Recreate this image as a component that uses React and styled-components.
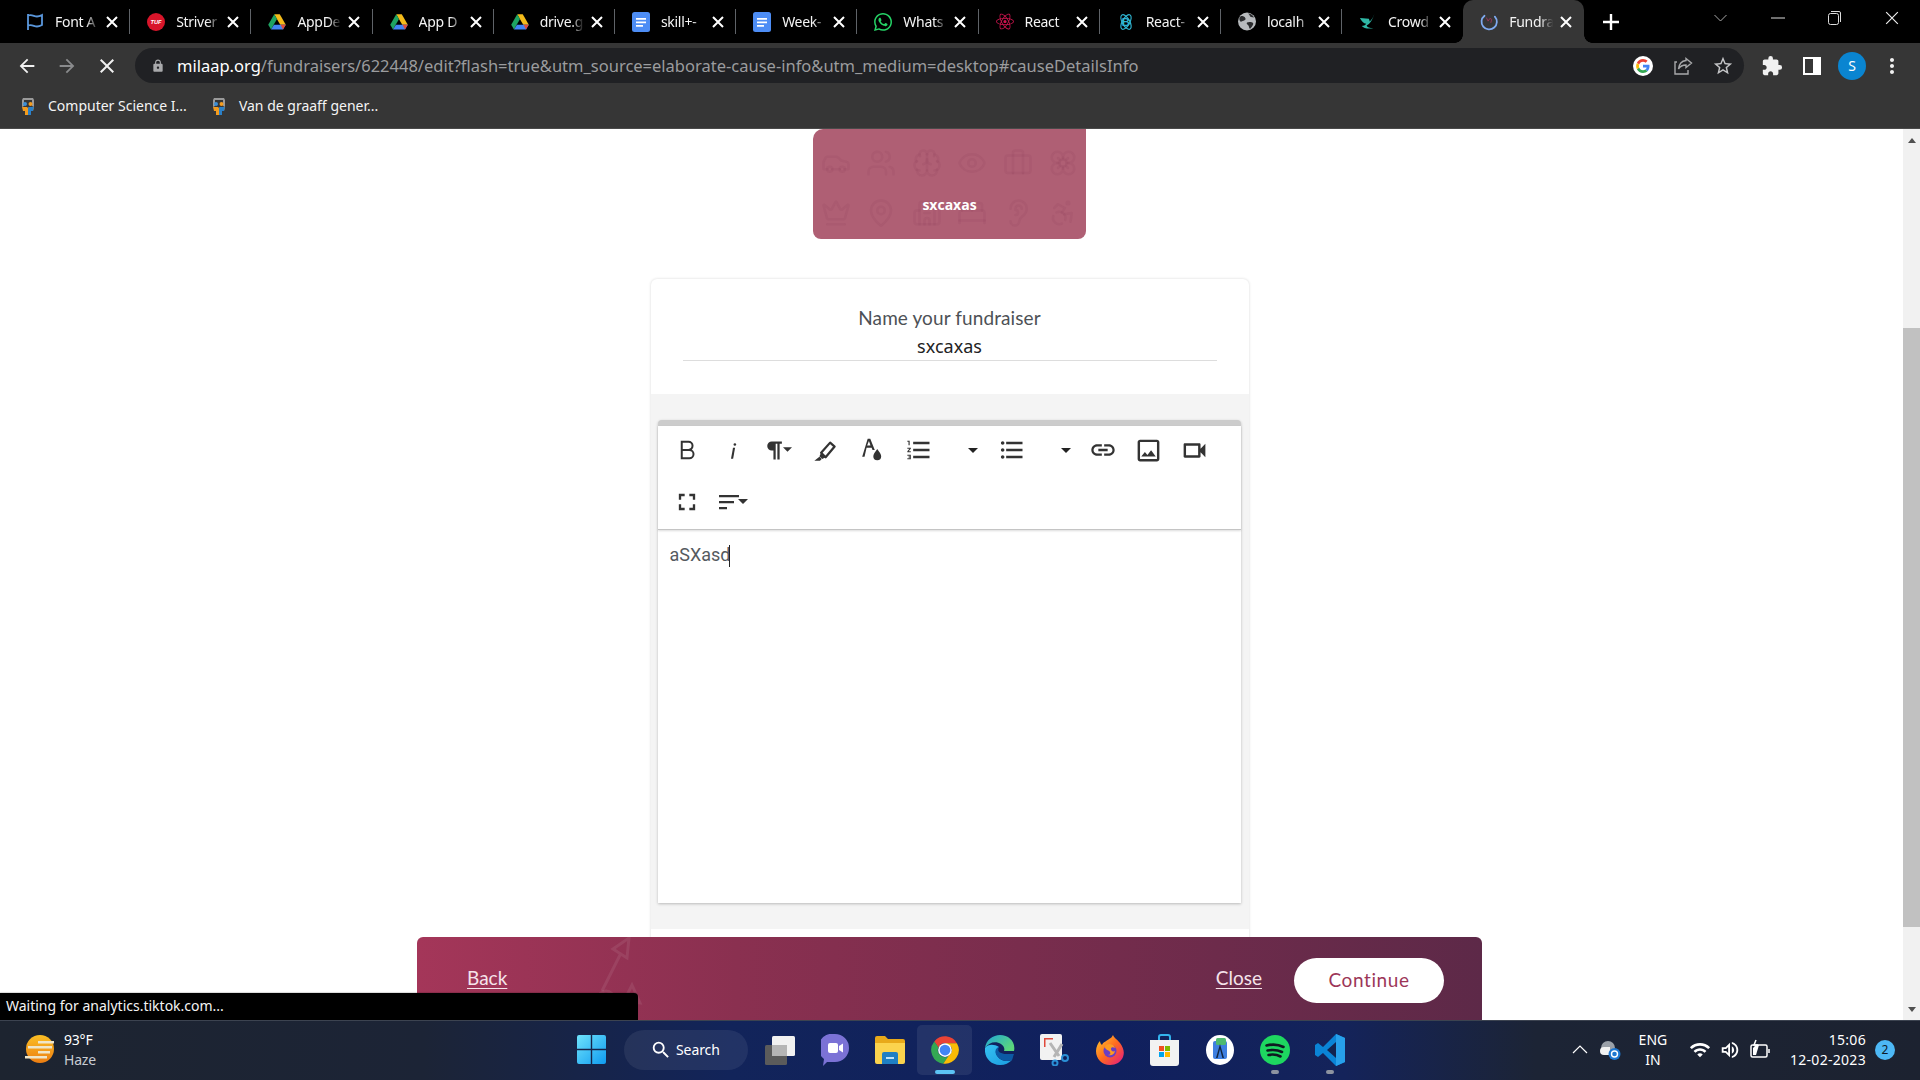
import React from "react"
import styled, { createGlobalStyle } from "styled-components"
import {
  Accessibility,
  BedDouble,
  Brain,
  Briefcase,
  Building2,
  Car,
  Crown,
  Ear,
  Eye,
  Flower,
  MapPin,
  Users,
} from "lucide-react"
import { FaReact, FaWhatsapp } from "react-icons/fa"
import {
  MdArrowBack,
  MdArrowForward,
  MdClose,
  MdFormatListBulleted,
  MdFormatListNumbered,
  MdFullscreen,
  MdLink,
  MdMoreVert,
  MdOutlineImage,
  MdOutlineVideocam,
  MdLock,
  MdStarBorder,
  MdExtension,
  MdSearch,
  MdWifi,
  MdOutlineVolumeUp,
} from "react-icons/md"

const GlobalStyle = createGlobalStyle`
  html, body {
    margin: 0;
    padding: 0;
    background: #fff;
    overflow: hidden;
  }
  * {
    box-sizing: border-box;
  }
`

const Screen = styled.div`
  width: 1920px;
  height: 1080px;
  display: flex;
  flex-direction: column;
  overflow: hidden;
  font-family: "Noto Sans", "Liberation Sans", sans-serif;
`

/* browser chrome */

const TabStrip = styled.div`
  height: 43px;
  flex: none;
  background: #000;
  display: flex;
  padding-left: 9px;
`

const Tab = styled.div`
  width: 121.2px;
  height: 43px;
  display: flex;
  align-items: center;
  position: relative;
  padding-left: 17px;
  background: ${(p) => (p.$active ? "#363636" : "transparent")};
  border-radius: ${(p) => (p.$active ? "10px 10px 0 0" : "0")};
  &::after {
    content: "";
    display: ${(p) => (p.$divider ? "block" : "none")};
    position: absolute;
    right: 0;
    top: 9px;
    height: 25px;
    width: 1px;
    background: #5f6368;
  }
`

const TabFlare = styled.i`
  position: absolute;
  bottom: 0;
  width: 8px;
  height: 8px;
  ${(p) =>
    p.$right
      ? "right: -8px; background: radial-gradient(circle at 100% 0, transparent 7.5px, #363636 8px);"
      : "left: -8px; background: radial-gradient(circle at 0 0, transparent 7.5px, #363636 8px);"}
`

const Favicon = styled.span`
  width: 18px;
  height: 18px;
  flex: none;
  display: flex;
  align-items: center;
  justify-content: center;
`

const TabTitle = styled.span`
  width: 46px;
  margin-left: 11px;
  flex: none;
  overflow: hidden;
  white-space: nowrap;
  color: #f4f4f4;
  font-size: 14px;
  letter-spacing: -0.3px;
  -webkit-mask-image: linear-gradient(90deg, #000 68%, transparent 96%);
  mask-image: linear-gradient(90deg, #000 68%, transparent 96%);
`

const TabClose = styled.span`
  margin-left: 5px;
  display: flex;
  color: #fff;
`

const NewTab = styled.span`
  margin-left: 18px;
  width: 18px;
  height: 43px;
  display: flex;
  align-items: center;
  justify-content: center;
`

const WindowControls = styled.div`
  margin-left: auto;
  display: flex;
  height: 36px;
`

const WindowButton = styled.span`
  width: 57px;
  display: flex;
  align-items: center;
  justify-content: center;
`

const Toolbar = styled.div`
  height: 40px;
  flex: none;
  background: #363636;
  display: flex;
  align-items: flex-end;
  padding: 0 8px 0 7px;
`

const ToolButton = styled.span`
  width: 40px;
  height: 35px;
  flex: none;
  display: flex;
  align-items: center;
  justify-content: center;
  color: ${(p) => p.$color || "#f1f1f1"};
`

const UrlBar = styled.div`
  flex: 1;
  height: 35px;
  margin: 0 8px;
  padding: 0 1px 0 16px;
  border-radius: 18px;
  background: #202124;
  display: flex;
  align-items: center;
`

const UrlText = styled.div`
  margin-left: 12px;
  flex: 1;
  font-size: 16.5px;
  white-space: nowrap;
  color: #9b9c9e;
  b {
    font-weight: 400;
    color: #fff;
  }
`

const Avatar = styled.span`
  width: 28px;
  height: 28px;
  border-radius: 50%;
  background: #0a85d1;
  color: #fff;
  font-size: 14px;
  display: flex;
  align-items: center;
  justify-content: center;
`

const Bookmarks = styled.div`
  height: 46px;
  flex: none;
  background: #363636;
  border-bottom: 1px solid #4a4a4a;
  display: flex;
  align-items: center;
  padding-left: 18px;
  gap: 22px;
`

const Bookmark = styled.div`
  display: flex;
  align-items: center;
  gap: 10px;
  color: #f4f4f4;
  font-size: 14px;
`

/* page */

const Viewport = styled.div`
  flex: 1;
  min-height: 0;
  display: flex;
  position: relative;
`

const Page = styled.div`
  flex: 1;
  display: flex;
  flex-direction: column;
  align-items: center;
  padding-right: 4px;
  overflow: hidden;
  background: #fff;
`

const CauseCard = styled.div`
  width: 273px;
  height: 110px;
  flex: none;
  position: relative;
  background: #af5f74;
  border-radius: 10px 0 8px 8px;
  display: flex;
  justify-content: center;
`

const CausePattern = styled.div`
  position: absolute;
  inset: 19px 0 0;
  display: grid;
  grid-template-columns: repeat(6, 1fr);
  grid-auto-rows: 50px;
  justify-items: center;
  color: rgba(125, 50, 75, 0.1);
`

const CauseTitle = styled.div`
  position: relative;
  margin-top: 66px;
  color: #fff;
  font-size: 14px;
  font-weight: 700;
  font-family: "Open Sans", sans-serif;
  line-height: 20px;
`

const FormCard = styled.div`
  width: 598px;
  margin-top: 40px;
  flex: none;
  background: #fff;
  border-radius: 6px;
  box-shadow: 0 0 3px rgba(0, 0, 0, 0.16);
`

const NameSection = styled.div`
  height: 115px;
  padding: 26px 32px 0;
  text-align: center;
`

const NameLabel = styled.div`
  font-family: Lato, sans-serif;
  font-size: 19px;
  letter-spacing: 0.1px;
  line-height: 25px;
  color: #4d5156;
`

const NameValue = styled.div`
  margin-top: 4px;
  height: 27px;
  font-family: "Noto Sans", sans-serif;
  font-size: 18px;
  line-height: 24px;
  color: #222;
  border-bottom: 1px solid #ddd;
`

const EditorSection = styled.div`
  background: #f4f4f4;
  padding: 26px 8px 26px 7px;
`

const Editor = styled.div`
  height: 483px;
  background: #fff;
  border-top: 6px solid #ccc;
  border-radius: 4px 4px 0 0;
  box-shadow: 0 1px 3px rgba(0, 0, 0, 0.24);
  display: flex;
  flex-direction: column;
`

const EditorToolbar = styled.div`
  height: 104px;
  flex: none;
  padding-left: 6px;
  display: flex;
  flex-direction: column;
  gap: 4px;
  border-bottom: 1px solid #c4c4c4;
  box-shadow: 0 1px 2px rgba(0, 0, 0, 0.14);
`

const ToolRow = styled.div`
  height: 48px;
  display: flex;
`

const EditorButton = styled.span`
  width: ${(p) => (p.$dropdown ? 93 : 46)}px;
  height: 48px;
  padding: ${(p) => (p.$dropdown ? "0 9px 0 11px" : "0")};
  display: flex;
  align-items: center;
  justify-content: ${(p) => (p.$dropdown ? "space-between" : "center")};
  color: #333;
  svg {
    flex: none;
  }
`

const Caret = styled.i`
  width: 0;
  height: 0;
  border-left: 5px solid transparent;
  border-right: 5px solid transparent;
  border-top: 5px solid #222;
`

const EditorBody = styled.div`
  padding: 13px 12px;
  font-family: Roboto, sans-serif;
  font-size: 18px;
  line-height: 24px;
  color: #555a60;
  display: flex;
`

const TextCursor = styled.i`
  width: 1px;
  height: 22px;
  margin: 2px 0 0 -2px;
  background: #222;
`

const CardTail = styled.div`
  height: 40px;
`

const Footer = styled.div`
  position: absolute;
  left: 417px;
  bottom: 0;
  width: 1065px;
  height: 83px;
  overflow: hidden;
  border-radius: 6px 6px 0 0;
  background: linear-gradient(90deg, #a43659 0%, #8a3050 30%, #6d2b4b 75%, #5d2948 100%);
  display: flex;
  align-items: flex-start;
  padding: 21px 38px 0 50px;
  font-family: Lato, sans-serif;
`

const FooterArt = styled.svg`
  position: absolute;
  left: 165px;
  top: 0;
`

const FooterLink = styled.a`
  font-size: 19px;
  line-height: 40px;
  color: #f5e3ea;
  text-decoration: underline;
  text-underline-offset: 3px;
  position: relative;
`

const FooterActions = styled.div`
  margin-left: auto;
  display: flex;
  gap: 32px;
`

const ContinueButton = styled.button`
  width: 150px;
  height: 45px;
  padding: 0 0 3px;
  border: 0;
  border-radius: 23px;
  background: #fff;
  color: #9c3658;
  font-family: Lato, sans-serif;
  font-size: 19px;
  letter-spacing: 0.6px;
`

const StatusBubble = styled.div`
  position: absolute;
  left: 0;
  bottom: 0;
  width: 638px;
  height: 27px;
  padding-left: 6px;
  background: #000;
  border-radius: 0 4px 0 0;
  box-shadow: 0 -1px 1px rgba(0, 0, 0, 0.15);
  color: #f4f4f4;
  font-size: 14px;
  line-height: 26px;
`

const Scrollbar = styled.div`
  width: 17px;
  flex: none;
  background: #f1f1f1;
  display: flex;
  flex-direction: column;
  align-items: center;
`

const ScrollArrow = styled.i`
  flex: none;
  width: 0;
  height: 0;
  border-left: 4px solid transparent;
  border-right: 4px solid transparent;
  ${(p) => (p.$down ? "border-top: 5px solid #505050; margin-top: auto; margin-bottom: 8px;" : "border-bottom: 5px solid #505050; margin-top: 9px;")}
`

const ScrollThumb = styled.div`
  width: 100%;
  height: 599px;
  margin-top: 185px;
  background: #c1c1c1;
`

/* taskbar */

const Taskbar = styled.div`
  height: 60px;
  flex: none;
  padding-bottom: 2px;
  border-top: 1px solid #3c4350;
  background: linear-gradient(90deg, #1d2430 0%, #1c2436 22%, #12245a 38%, #10205e 58%, #14235a 70%, #1c2435 80%, #1c2230 100%);
  display: flex;
  align-items: center;
  color: #fff;
  position: relative;
`

const Weather = styled.div`
  width: 577px;
  flex: none;
  padding-left: 24px;
  display: flex;
  align-items: center;
  gap: 9px;
`

const WeatherText = styled.div`
  font-size: 14px;
  line-height: 20px;
  letter-spacing: -0.2px;
  span {
    display: block;
    color: #c8ccd2;
  }
`

const SearchPill = styled.div`
  width: 124px;
  height: 40px;
  margin: 0 4px 0 18px;
  border-radius: 20px;
  background: rgba(255, 255, 255, 0.07);
  padding-left: 26px;
  display: flex;
  align-items: center;
  gap: 4px;
  font-size: 14px;
  letter-spacing: -0.1px;
`

const TaskIcon = styled.span`
  width: 55px;
  height: 50px;
  flex: none;
  display: flex;
  align-items: center;
  justify-content: center;
  position: relative;
  border-radius: 5px;
  background: ${(p) => (p.$active ? "rgba(255,255,255,0.08)" : "transparent")};
  &::after {
    content: "";
    display: ${(p) => (p.$active || p.$running ? "block" : "none")};
    position: absolute;
    bottom: 1px;
    left: 50%;
    transform: translateX(-50%);
    width: ${(p) => (p.$active ? 20 : 8)}px;
    height: 4px;
    border-radius: 2px;
    background: ${(p) => (p.$active ? "#5cc3f5" : "#8d93a0")};
  }
`

const Tray = styled.div`
  margin-left: auto;
  padding-right: 25px;
  display: flex;
  align-items: center;
`

const TrayIcon = styled.span`
  width: 30px;
  display: flex;
  justify-content: center;
`

const Lang = styled.div`
  width: 50px;
  margin: 0 7px 0 3px;
  text-align: center;
  font-size: 14px;
  line-height: 20px;
`

const Clock = styled.div`
  margin-left: 15px;
  text-align: right;
  font-size: 14px;
  line-height: 20px;
  letter-spacing: 0.3px;
`

const Badge = styled.span`
  width: 20px;
  height: 20px;
  margin-left: 9px;
  border-radius: 50%;
  background: #4db8f5;
  color: #0d1b2a;
  font-size: 12px;
  display: flex;
  align-items: center;
  justify-content: center;
`

/* drawn icons */

const FlagIcon = () => (
  <svg width="20" height="20" viewBox="0 0 18 18" fill="none" stroke="#5a97dc" strokeWidth="1.8">
    <path d="M2 1v16M2 2.500c4-1.500 6 1 9 1 2 0 3-.5 5-1.500v10c-2 1-3 1.500-5 1.500-3 0-5-2.500-9-1" />
  </svg>
)

const TufIcon = () => (
  <svg width="20" height="20" viewBox="0 0 19 19">
    <circle cx="9.500" cy="9.500" r="9.500" fill="#d8152a" />
    <text x="9.500" y="11.500" fontSize="6" fontWeight="700" fontStyle="italic" textAnchor="middle" fill="#fff" fontFamily="Liberation Sans">TUF</text>
  </svg>
)

const DriveIcon = () => (
  <svg width="20" height="18" viewBox="0 0 24 21">
    <path d="M8.300 0h7.400l8 14h-7.400z" fill="#f4bb1a" />
    <path d="M8.300 0L.3 14l3.700 6.500 8-14z" fill="#1ea362" />
    <path d="M4 20.500h16l3.700-6.500H8z" fill="#4285f4" />
    <path d="M20 20.500l3.700-6.500h-7z" fill="#e24c3b" />
  </svg>
)

const DocsIcon = () => (
  <svg width="19" height="22" viewBox="0 0 18 20">
    <rect width="18" height="20" rx="2.500" fill="#4d8df5" />
    <path d="M4 6h10v1.800H4zM4 9.500h10v1.800H4zM4 13h7v1.800H4z" fill="#fff" />
  </svg>
)

const ReactBootstrapIcon = () => (
  <svg width="22" height="22" viewBox="0 0 22 22" fill="none" stroke="#2fb5d2" strokeWidth="1.400">
    <ellipse cx="11" cy="11" rx="10" ry="4.500" transform="rotate(60 11 11)" />
    <ellipse cx="11" cy="11" rx="10" ry="4.500" transform="rotate(120 11 11)" />
    <text x="11" y="16" fontSize="14" fontWeight="700" textAnchor="middle" fill="#2fb5d2" stroke="none" fontFamily="Liberation Sans">B</text>
  </svg>
)

const GlobeIcon = () => (
  <svg width="19" height="19" viewBox="0 0 18 18">
    <circle cx="9" cy="9" r="9" fill="#b7babd" />
    <path d="M3 3.500c2 0 4 .5 4.500 2.500S5 8 3.500 9 1 7 1.500 5zM10 1c2 1 1.500 3 3 3.500l3 .5C15 3 13 1 10 1zM9 10c2-1 5-.5 6 .5s-1.500 4.500-3 6c-1.500-1-.5-3-2-4s-1.500-1.500-1-2.500z" fill="#2a2b2d" />
  </svg>
)

const CrowdIcon = () => (
  <svg width="23" height="21" viewBox="0 0 20 18">
    <path d="M17 1c-1.500 4-3 6-5 8l-1-3L1 5c2 4 4 6 7 6.500-1 1.500-3 2.500-5 2.500 2 2.500 7 3.500 13 2.500-4 0-7-1-7.500-3C12 12 15 7 17 1z" fill="#2fb8a6" />
  </svg>
)

const LoadingIcon = () => (
  <svg width="22" height="22" viewBox="0 0 20 20" fill="none">
    <path d="M5 3A8.500 8.500 0 1 0 16.500 4" stroke="#7faaf0" strokeWidth="2" strokeLinecap="round" />
    <path d="M7 5l2 4 2-3 2 1-1 4" stroke="#9c3658" strokeWidth="1" />
  </svg>
)

const MilaapIcon = () => (
  <svg width="20" height="20" viewBox="0 0 20 20">
    <path d="M5 2h10l1 2v7l-2-1v-6H6v6l-2 1V4z" fill="#9a9a9a" />
    <circle cx="7" cy="8" r="2" fill="#3d8fd6" />
    <circle cx="12.500" cy="8" r="2" fill="#f39c1f" />
    <path d="M4 11h5l1 1v7H7v-4H5zM16 11h-5l-1 1v7h3v-4h2z" fill="#f39c1f" />
    <path d="M11 11h5l-1 4h-2v4h-3v-7z" fill="#2b80c7" />
  </svg>
)

const BoldIcon = () => (
  <svg width="28" height="28" viewBox="0 0 24 24" fill="none" stroke="#333" strokeWidth="1.700">
    <path d="M7.500 5h5.800a3.400 3.400 0 0 1 0 6.900H7.500zM7.500 11.900h6.500a3.600 3.600 0 0 1 0 7.200H7.500z" />
  </svg>
)

const ItalicIcon = () => (
  <svg width="28" height="28" viewBox="0 0 24 24" fill="#333">
    <path d="M12 10h1.800l-1.700 9.500h-1.800z" />
    <circle cx="13.600" cy="7.300" r="1.100" />
  </svg>
)

const ParagraphIcon = () => (
  <svg width="27" height="27" viewBox="0 0 24 24" fill="#333">
    <path d="M9 4h9v2h-2v14h-2V6h-1.500v14h-2v-8H9a4 4 0 0 1 0-8z" transform="translate(-3 0)" />
    <path d="M16 9h8l-4 4z" />
  </svg>
)

const HighlighterIcon = () => (
  <svg width="27" height="27" viewBox="0 0 24 24" fill="none">
    <path d="M9 14l8-9 4 3.500-8 9.500z" stroke="#333" strokeWidth="2" strokeLinejoin="round" />
    <path d="M9 14l-1.500 3 2.500 2.500 3-1.500zM3 21l4.500-3.500 2 2L8 21z" fill="#333" />
  </svg>
)

const TextColorIcon = () => (
  <svg width="27" height="30" viewBox="0 0 24 26" fill="#333">
    <path d="M9.500 3h2.300l4 10h-2l-.8-2H8.500L6.700 19H4.600zM9 9h3l-1.400-4z" />
    <path d="M18 12c2 3 3.500 4.500 3.500 6.500a3.500 3.500 0 0 1-7 0c0-2 1.500-3.500 3.500-6.500z" />
  </svg>
)

const AlignIcon = () => (
  <svg width="34" height="24" viewBox="0 0 34 24" fill="#333">
    <path d="M3 5h20v2.200H3zM3 11h15v2.200H3zM3 17h8v2.200H3zM22 9h10l-5 5z" />
  </svg>
)

const GoogleIcon = () => (
  <svg width="20" height="20" viewBox="0 0 20 20">
    <circle cx="10" cy="10" r="10" fill="#fff" />
    <path d="M16.500 10.200c0-.5 0-1-.1-1.400H10v2.700h3.700c-.2.900-.7 1.600-1.400 2l2.200 1.700c1.300-1.200 2-2.900 2-5z" fill="#4285f4" />
    <path d="M10 17c1.800 0 3.300-.6 4.500-1.700l-2.200-1.700c-.6.400-1.400.7-2.300.7-1.800 0-3.300-1.200-3.800-2.800L3.900 13.200C5 15.500 7.300 17 10 17z" fill="#34a853" />
    <path d="M6.200 11.500c-.3-.9-.3-1.900 0-2.800L3.900 6.900c-1 1.900-1 4.400 0 6.300z" fill="#fbbc05" />
    <path d="M10 5.800c1 0 1.900.3 2.600 1l2-2C13.300 3.700 11.700 3 10 3 7.300 3 5 4.500 3.900 6.800l2.300 1.800C6.700 7 8.200 5.800 10 5.800z" fill="#ea4335" />
  </svg>
)

const ShareIcon = () => (
  <svg width="20" height="20" viewBox="0 0 20 20" fill="none" stroke="#a8a9ab" strokeWidth="1.400">
    <path d="M13 2.500l5.500 4.500-5.500 4.500V9c-4 0-6 1.500-7.500 4 .5-4.500 3-8 7.500-8.500zM4 6H2v12h13v-4" />
  </svg>
)

const SidePanelIcon = () => (
  <svg width="18" height="18" viewBox="0 0 18 18">
    <path fillRule="evenodd" d="M0 0h18v18H0zM2 2v14h8V2z" fill="#fff" />
  </svg>
)

const SunHazeIcon = () => (
  <svg width="31" height="31" viewBox="0 0 31 31">
    <defs>
      <linearGradient id="sun" x1="0" y1="0" x2="0" y2="1">
        <stop offset="0" stopColor="#fbbf24" />
        <stop offset="1" stopColor="#ec7d12" />
      </linearGradient>
    </defs>
    <circle cx="16" cy="15" r="14" fill="url(#sun)" />
    <path d="M14 7h16v2.500H14zM4 12h24v2.500H4zM14 17h12v2.500H14zM1 22h22v2.500H1z" fill="#efe5c8" />
  </svg>
)

const WindowsIcon = () => (
  <svg width="29" height="29" viewBox="0 0 29 29">
    <defs>
      <linearGradient id="win" x1="0" y1="0" x2="1" y2="1">
        <stop offset="0" stopColor="#6fe3fb" />
        <stop offset="1" stopColor="#0f9bf0" />
      </linearGradient>
    </defs>
    <path d="M0 2a2 2 0 0 1 2-2h11.800v13.800H0zM15.200 0H27a2 2 0 0 1 2 2v11.800H15.200zM0 15.200h13.800V29H2a2 2 0 0 1-2-2zM15.200 15.200H29V27a2 2 0 0 1-2 2H15.200z" fill="url(#win)" />
  </svg>
)

const TaskViewIcon = () => (
  <svg width="30" height="30" viewBox="0 0 30 30">
    <rect x="0" y="10" width="22" height="20" rx="1.500" fill="#5b5b5b" />
    <rect x="7" y="1" width="23" height="20" rx="1.500" fill="#f1f1f1" />
    <rect x="7" y="10" width="15" height="11" fill="#b5b5b5" />
  </svg>
)

const TeamsIcon = () => (
  <svg width="28" height="32" viewBox="0 0 28 32">
    <path d="M14 0a14 14 0 0 1 0 28H6l-4 4 1-7A14 14 0 0 1 14 0z" fill="#7b72d6" />
    <rect x="7" y="9" width="10" height="10" rx="2" fill="#fff" />
    <path d="M18 12l4-2.500v9L18 16z" fill="#fff" />
  </svg>
)

const FolderIcon = () => (
  <svg width="30" height="28" viewBox="0 0 30 28">
    <path d="M0 2a2 2 0 0 1 2-2h8l3 3h15a2 2 0 0 1 2 2v4H0z" fill="#e8a91a" />
    <path d="M0 7h30v19a2 2 0 0 1-2 2H2a2 2 0 0 1-2-2z" fill="#fbd34e" />
    <path d="M7 18a2 2 0 0 1 2-2h12a2 2 0 0 1 2 2v10H7z" fill="#1f7fc4" />
    <rect x="11" y="21" width="8" height="2" fill="#bfe3fa" />
  </svg>
)

const ChromeIcon = () => (
  <svg width="30" height="30" viewBox="0 0 24 24">
    <path d="M3.400 5.100A11 11 0 0 1 21.530 6.500H12a5.500 5.500 0 0 0-5.200 3.700z" fill="#ea4335" />
    <path d="M3.400 5.100A11 11 0 0 0 10.600 22.900L14.750 16.760A5.500 5.500 0 0 1 6.800 9.800z" fill="#34a853" />
    <path d="M21.530 6.500A11 11 0 0 1 10.600 22.900L14.750 16.760A5.500 5.500 0 0 0 16.760 9.250L12 6.500z" fill="#fbbc05" />
    <circle cx="12" cy="12" r="5.500" fill="#fff" />
    <circle cx="12" cy="12" r="4.300" fill="#4285f4" />
  </svg>
)

const EdgeIcon = () => (
  <svg width="30" height="30" viewBox="0 0 30 30">
    <defs>
      <linearGradient id="edgeA" x1="0" y1="0" x2="1" y2="1">
        <stop offset="0" stopColor="#35c1f1" />
        <stop offset="1" stopColor="#1b9de2" />
      </linearGradient>
      <linearGradient id="edgeB" x1="0" y1="0" x2="1" y2="0.600">
        <stop offset="0" stopColor="#1fa5d8" />
        <stop offset="1" stopColor="#5bd67c" />
      </linearGradient>
    </defs>
    <path d="M15 0C8 0 1 5 0 13c4-6 11-7 16-4 3 2 4 5 3 7h10C31 7 24 0 15 0z" fill="url(#edgeB)" />
    <path d="M0 13c-1 9 5 17 15 17 5 0 9-2 12-5-5 2-11 1-14-3-3-3-3-8 1-10C9 9 3 9 0 13z" fill="url(#edgeA)" />
    <path d="M13 22c-4-4-3-9 1-10-3 5 3 7 7 7h8c-1 2-1 4-2 6-5 2-11 1-14-3z" fill="#0c59a4" />
  </svg>
)

const SnipIcon = () => (
  <svg width="30" height="32" viewBox="0 0 30 32" fill="none">
    <rect x="0" y="0" width="22" height="26" rx="2" fill="#f2f2f2" />
    <path d="M4 4h9v1.500H4zM4 4h1.500v9H4z" fill="#e0493b" />
    <path d="M10 9l9 13M22 10l-8 13" stroke="#b5b5b5" strokeWidth="3" />
    <circle cx="25" cy="24" r="3" stroke="#2a8fd6" strokeWidth="2" />
    <circle cx="15" cy="29" r="2.500" stroke="#2a8fd6" strokeWidth="2" />
  </svg>
)

const FirefoxIcon = () => (
  <svg width="28" height="30" viewBox="0 0 28 30">
    <defs>
      <linearGradient id="fox" x1="0" y1="0" x2="1" y2="1">
        <stop offset="0" stopColor="#ffcf2d" />
        <stop offset="0.500" stopColor="#ff6a1f" />
        <stop offset="1" stopColor="#e31587" />
      </linearGradient>
    </defs>
    <path d="M17 0c1 3 4 4 7 8 3 4 5 9 3 14-2 5-7 8-13 8C6 30 0 24 0 16 0 12 2 8 4 6c0 2 1 3 2 4 1-3 5-4 7-6 2-1 3-2 4-4z" fill="url(#fox)" />
    <circle cx="14" cy="16" r="6.500" fill="#6a3fc4" />
    <path d="M10 10c3-2 8-1 9 3-2-1-4-1-4 1s2 3 4 2c-1 4-4 5-7 4 2 0 3-1 2-3s-5-2-5-5c0-1 0-1 1-2z" fill="#ff9a1f" />
  </svg>
)

const StoreIcon = () => (
  <svg width="29" height="32" viewBox="0 0 29 32" fill="none">
    <path d="M9 7V3a2 2 0 0 1 2-2h7a2 2 0 0 1 2 2v4" stroke="#33b3ee" strokeWidth="2" />
    <path d="M0 6h29v23a3 3 0 0 1-3 3H3a3 3 0 0 1-3-3z" fill="#f2f2f2" />
    <rect x="9" y="12" width="5" height="5" fill="#f05022" />
    <rect x="15" y="12" width="5" height="5" fill="#7fba00" />
    <rect x="9" y="18" width="5" height="5" fill="#00a4ef" />
    <rect x="15" y="18" width="5" height="5" fill="#ffb900" />
  </svg>
)

const StudioIcon = () => (
  <svg width="28" height="30" viewBox="0 0 28 30">
    <ellipse cx="14" cy="15" rx="14" ry="15" fill="#fff" />
    <rect x="7" y="6" width="14" height="18" rx="2" fill="#3f7fe0" />
    <rect x="10" y="3" width="10" height="7" rx="1.500" fill="#4eb96f" />
    <path d="M14 9l-4 14h1.600l2.400-9 2.400 9H18z" fill="#12263f" />
  </svg>
)

const SpotifyIcon = () => (
  <svg width="30" height="30" viewBox="0 0 30 30" fill="none">
    <circle cx="15" cy="15" r="15" fill="#1ed760" />
    <path d="M6.500 10.500c6-1.500 12-1 17 1.500M7.500 15.500c5-1 10.500-.5 14.500 1.500M8.500 20c4-.8 8.500-.4 12 1.500" stroke="#0f1a20" strokeWidth="2.600" strokeLinecap="round" />
  </svg>
)

const VsCodeIcon = () => (
  <svg width="30" height="32" viewBox="0 0 30 32">
    <path d="M21 0l9 4v24l-9 4L8 19l-5 4-3-2v-10l3-2 5 4z" fill="#0a84d6" />
    <path d="M21 8v16l-9-8z" fill="#12244f" />
    <path d="M21 0l9 4v24l-9 4z" fill="#27a0ea" />
  </svg>
)

const CloudSyncIcon = () => (
  <svg width="22" height="22" viewBox="0 0 22 22">
    <circle cx="9" cy="9" r="7" fill="#9aa0a8" />
    <path d="M1 12a4 4 0 0 1 4-4h6v8H5a4 4 0 0 1-4-4z" fill="#f2f2f2" />
    <circle cx="15.500" cy="15" r="6" fill="#1f78d1" />
    <circle cx="15.500" cy="15" r="3" fill="none" stroke="#fff" strokeWidth="1.400" />
  </svg>
)

const BatteryIcon = () => (
  <svg width="22" height="22" viewBox="0 0 22 22" fill="none" stroke="#fff" strokeWidth="1.500">
    <rect x="2" y="6" width="16" height="12" rx="1.500" />
    <path d="M20 10v4" />
    <path d="M4 16V9l3-3h3l-3 10z" fill="#fff" stroke="none" />
    <path d="M7 1L5 6h3l-2 3" />
  </svg>
)

const CloseMark = ({ size = 12, color = "#fff", width = 2 }) => (
  <svg width={size} height={size} viewBox="0 0 12 12" stroke={color} strokeWidth={width} fill="none">
    <path d="M1 1l10 10M11 1L1 11" />
  </svg>
)

const tabs = [
  { title: "Font A", icon: <FlagIcon /> },
  { title: "Striver", icon: <TufIcon /> },
  { title: "AppDe", icon: <DriveIcon /> },
  { title: "App D", icon: <DriveIcon /> },
  { title: "drive.g", icon: <DriveIcon /> },
  { title: "skill+-", icon: <DocsIcon /> },
  { title: "Week-", icon: <DocsIcon /> },
  { title: "Whats", icon: <FaWhatsapp size={22} color="#25d366" /> },
  { title: "React", icon: <FaReact size={21} color="#d0144f" /> },
  { title: "React-", icon: <ReactBootstrapIcon /> },
  { title: "localh", icon: <GlobeIcon /> },
  { title: "Crowd", icon: <CrowdIcon /> },
  { title: "Fundra", icon: <LoadingIcon />, active: true },
]

const patternIcons = [Car, Users, Brain, Eye, Briefcase, Flower, Crown, MapPin, Building2, BedDouble, Ear, Accessibility]

const taskIcons = [
  { id: "view", icon: <TaskViewIcon /> },
  { id: "teams", icon: <TeamsIcon /> },
  { id: "files", icon: <FolderIcon /> },
  { id: "chrome", icon: <ChromeIcon />, active: true },
  { id: "edge", icon: <EdgeIcon /> },
  { id: "snip", icon: <SnipIcon /> },
  { id: "firefox", icon: <FirefoxIcon /> },
  { id: "store", icon: <StoreIcon /> },
  { id: "studio", icon: <StudioIcon /> },
  { id: "spotify", icon: <SpotifyIcon />, running: true },
  { id: "vscode", icon: <VsCodeIcon />, running: true },
]

const App = () => {
  return (
    <Screen>
      <GlobalStyle />
      <TabStrip>
        {tabs.map((tab, i) => (
          <Tab key={tab.title} $active={tab.active} $divider={i < 11 && !tab.active}>
            {tab.active && <TabFlare />}
            <Favicon>{tab.icon}</Favicon>
            <TabTitle>{tab.title}</TabTitle>
            <TabClose>
              <CloseMark />
            </TabClose>
            {tab.active && <TabFlare $right />}
          </Tab>
        ))}
        <NewTab>
          <svg width="16" height="16" viewBox="0 0 16 16" stroke="#fff" strokeWidth="2.400">
            <path d="M8 0v16M0 8h16" />
          </svg>
        </NewTab>
        <WindowControls>
          <WindowButton>
            <svg width="13" height="8" viewBox="0 0 13 8" fill="none" stroke="#a8a8a8">
              <path d="M.5 1l6 6 6-6" />
            </svg>
          </WindowButton>
          <WindowButton>
            <svg width="14" height="2" viewBox="0 0 14 2" stroke="#ddd">
              <path d="M0 1h14" />
            </svg>
          </WindowButton>
          <WindowButton>
            <svg width="13" height="14" viewBox="0 0 13 14" fill="none" stroke="#ddd">
              <rect x=".5" y="2.500" width="10" height="11" rx="2" />
              <path d="M3 .5h8a1.500 1.500 0 0 1 1.500 1.500v9" />
            </svg>
          </WindowButton>
          <WindowButton>
            <CloseMark size={14} color="#eee" width={1} />
          </WindowButton>
        </WindowControls>
      </TabStrip>
      <Toolbar>
        <ToolButton>
          <MdArrowBack size={22} />
        </ToolButton>
        <ToolButton $color="#8a8b8d">
          <MdArrowForward size={22} />
        </ToolButton>
        <ToolButton>
          <MdClose size={24} />
        </ToolButton>
        <UrlBar>
          <MdLock size={14} color="#a8a9ab" />
          <UrlText>
            <b>milaap.org</b>/fundraisers/622448/edit?flash=true&amp;utm_source=elaborate-cause-info&amp;utm_medium=desktop#causeDetailsInfo
          </UrlText>
          <ToolButton>
            <GoogleIcon />
          </ToolButton>
          <ToolButton>
            <ShareIcon />
          </ToolButton>
          <ToolButton $color="#c4c5c7">
            <MdStarBorder size={22} />
          </ToolButton>
        </UrlBar>
        <ToolButton>
          <MdExtension size={22} />
        </ToolButton>
        <ToolButton>
          <SidePanelIcon />
        </ToolButton>
        <ToolButton>
          <Avatar>S</Avatar>
        </ToolButton>
        <ToolButton>
          <MdMoreVert size={24} />
        </ToolButton>
      </Toolbar>
      <Bookmarks>
        <Bookmark>
          <MilaapIcon />
          Computer Science I...
        </Bookmark>
        <Bookmark>
          <MilaapIcon />
          Van de graaff gener...
        </Bookmark>
      </Bookmarks>

      <Viewport>
        <Page>
          <CauseCard>
            <CausePattern>
              {patternIcons.map((Icon, i) => (
                <Icon key={i} size={30} strokeWidth={2} />
              ))}
            </CausePattern>
            <CauseTitle>sxcaxas</CauseTitle>
          </CauseCard>
          <FormCard>
            <NameSection>
              <NameLabel>Name your fundraiser</NameLabel>
              <NameValue>sxcaxas</NameValue>
            </NameSection>
            <EditorSection>
              <Editor>
                <EditorToolbar>
                  <ToolRow>
                    <EditorButton><BoldIcon /></EditorButton>
                    <EditorButton><ItalicIcon /></EditorButton>
                    <EditorButton><ParagraphIcon /></EditorButton>
                    <EditorButton><HighlighterIcon /></EditorButton>
                    <EditorButton><TextColorIcon /></EditorButton>
                    <EditorButton $dropdown>
                      <MdFormatListNumbered size={28} />
                      <Caret />
                    </EditorButton>
                    <EditorButton $dropdown>
                      <MdFormatListBulleted size={28} />
                      <Caret />
                    </EditorButton>
                    <EditorButton><MdLink size={28} /></EditorButton>
                    <EditorButton><MdOutlineImage size={29} /></EditorButton>
                    <EditorButton><MdOutlineVideocam size={29} /></EditorButton>
                  </ToolRow>
                  <ToolRow>
                    <EditorButton><MdFullscreen size={28} /></EditorButton>
                    <EditorButton><AlignIcon /></EditorButton>
                  </ToolRow>
                </EditorToolbar>
                <EditorBody>
                  aSXasd
                  <TextCursor />
                </EditorBody>
              </Editor>
            </EditorSection>
            <CardTail />
          </FormCard>
        </Page>
        <Scrollbar>
          <ScrollArrow />
          <ScrollThumb />
          <ScrollArrow $down />
        </Scrollbar>

        <Footer>
          <FooterArt width="120" height="83" viewBox="0 0 120 83" fill="none" stroke="rgba(255,255,255,0.08)" strokeWidth="3">
            <path d="M47 1L31 12l14 9zM38 18L20 54" />
            <circle cx="24" cy="62" r="8" />
            <path d="M50 48l8 18-16-2z" />
          </FooterArt>
          <FooterLink>Back</FooterLink>
          <FooterActions>
            <FooterLink>Close</FooterLink>
            <ContinueButton>Continue</ContinueButton>
          </FooterActions>
        </Footer>
        <StatusBubble>Waiting for analytics.tiktok.com...</StatusBubble>
      </Viewport>

      <Taskbar>
        <Weather>
          <SunHazeIcon />
          <WeatherText>
            93°F
            <span>Haze</span>
          </WeatherText>
        </Weather>
        <WindowsIcon />
        <SearchPill>
          <MdSearch size={22} />
          Search
        </SearchPill>
        {taskIcons.map((task) => (
          <TaskIcon key={task.id} $active={task.active} $running={task.running}>
            {task.icon}
          </TaskIcon>
        ))}
        <Tray>
          <TrayIcon>
            <svg width="16" height="9" viewBox="0 0 16 9" fill="none" stroke="#fff" strokeWidth="1.200">
              <path d="M1 8l7-7 7 7" />
            </svg>
          </TrayIcon>
          <TrayIcon>
            <CloudSyncIcon />
          </TrayIcon>
          <Lang>
            ENG
            <br />
            IN
          </Lang>
          <TrayIcon>
            <MdWifi size={22} />
          </TrayIcon>
          <TrayIcon>
            <MdOutlineVolumeUp size={22} />
          </TrayIcon>
          <TrayIcon>
            <BatteryIcon />
          </TrayIcon>
          <Clock>
            15:06
            <br />
            12-02-2023
          </Clock>
          <Badge>2</Badge>
        </Tray>
      </Taskbar>
    </Screen>
  )
}

export default App
